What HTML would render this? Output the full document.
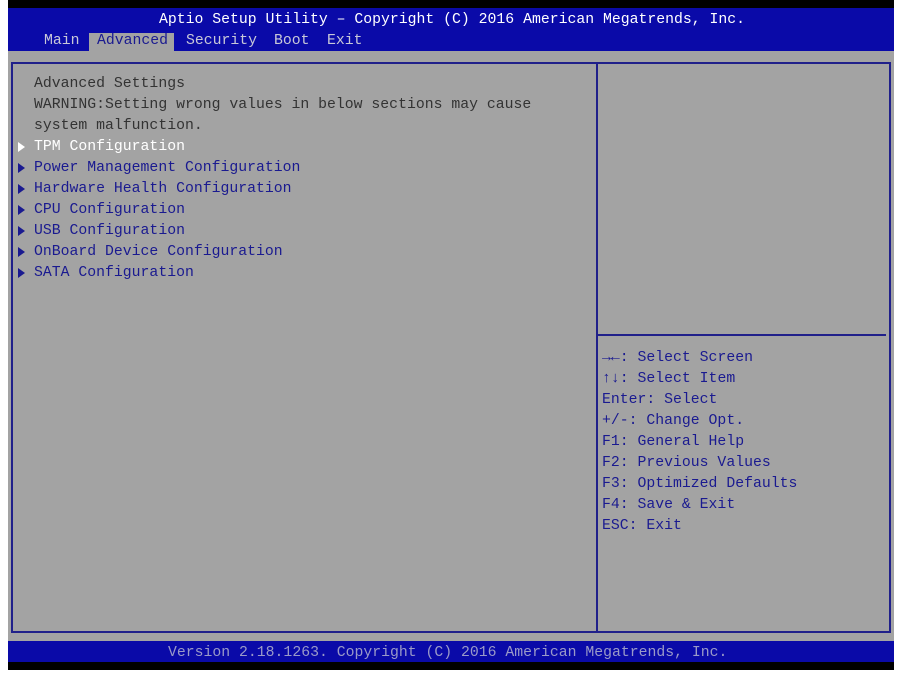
<!DOCTYPE html>
<html><head><style>
html,body{margin:0;padding:0;width:900px;height:673px;background:#fff;overflow:hidden;position:relative;font-family:"Liberation Mono",monospace;font-size:14.8px;}
div{position:absolute;white-space:pre;}
.t{line-height:21px;}
.tri{position:absolute;left:18px;width:0;height:0;border-left:7px solid #1a1a90;border-top:5px solid transparent;border-bottom:5px solid transparent;}
</style></head><body>
<div style="left:8px;top:0;width:886px;height:8px;background:#000"></div>
<div style="left:8px;top:8px;width:886px;height:43px;background:#0a0aa8"></div>
<div style="left:8px;top:51px;width:886px;height:590px;background:#a3a3a3"></div>
<div style="left:8px;top:641px;width:886px;height:21px;background:#0a0aa8"></div>
<div style="left:8px;top:662px;width:886px;height:8px;background:#000"></div>
<div class="t" style="left:159px;top:10px;color:#fff">Aptio Setup Utility – Copyright (C) 2016 American Megatrends, Inc.</div>
<div style="left:89px;top:33px;width:85px;height:18px;background:#a3a3a3"></div>
<div class="t" style="left:44px;top:31px;color:#c8c8d8">Main</div>
<div class="t" style="left:97px;top:31px;color:#1a1a90">Advanced</div>
<div class="t" style="left:186px;top:31px;color:#c8c8d8">Security</div>
<div class="t" style="left:274px;top:31px;color:#c8c8d8">Boot</div>
<div class="t" style="left:327px;top:31px;color:#c8c8d8">Exit</div>
<div style="left:11px;top:62px;width:876px;height:567px;border:2px solid #20208a"></div>
<div style="left:596px;top:62px;width:2px;height:569px;background:#20208a"></div>
<div style="left:598px;top:334px;width:288px;height:2px;background:#20208a"></div>
<div class="t" style="left:34px;top:74px;color:#333">Advanced Settings
WARNING:Setting wrong values in below sections may cause
system malfunction.</div>
<div class="tri" style="top:142px;border-left-color:#fff"></div>
<div class="tri" style="top:163px"></div>
<div class="tri" style="top:184px"></div>
<div class="tri" style="top:205px"></div>
<div class="tri" style="top:226px"></div>
<div class="tri" style="top:247px"></div>
<div class="tri" style="top:268px"></div>
<div class="t" style="left:34px;top:137px;color:#1a1a90"><span style="color:#fff">TPM Configuration</span>
Power Management Configuration
Hardware Health Configuration
CPU Configuration
USB Configuration
OnBoard Device Configuration
SATA Configuration</div>
<div class="t" style="left:602px;top:348px;color:#1a1a90"><b>→←</b>: Select Screen
<b>↑↓</b>: Select Item
Enter: Select
+/-: Change Opt.
F1: General Help
F2: Previous Values
F3: Optimized Defaults
F4: Save &amp; Exit
ESC: Exit</div>
<div class="t" style="left:168px;top:643px;line-height:21px;color:#9a9ac8">Version 2.18.1263. Copyright (C) 2016 American Megatrends, Inc.</div>
</body></html>
